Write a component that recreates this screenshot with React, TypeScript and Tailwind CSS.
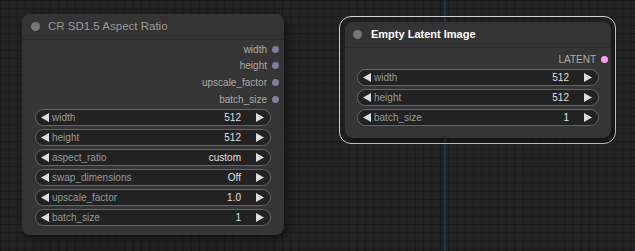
import React from 'react';

type Widget = { label: string; value: string };

const font = "font-['Liberation_Sans',Arial,sans-serif]";

function Arrow({ dir }: { dir: 'l' | 'r' }) {
  return (
    <svg width="8" height="9" viewBox="0 0 8 9" className="shrink-0">
      {dir === 'l' ? (
        <polygon points="8,0 8,9 0,4.5" fill="#dddddd" />
      ) : (
        <polygon points="0,0 0,9 8,4.5" fill="#dddddd" />
      )}
    </svg>
  );
}

function WidgetRow({ w }: { w: Widget }) {
  return (
    <div className="h-[20px] flex items-center">
      <div className="h-[17px] w-full rounded-full border border-[#646464] bg-[#222222] flex items-center pl-[5px] pr-[6px] text-[10px]">
        <Arrow dir="l" />
        <span className="ml-[3px] text-[#999999]">{w.label}</span>
        <span className="ml-auto text-[#e0e0e0]">{w.value}</span>
        <span className="ml-[15px]">
          <Arrow dir="r" />
        </span>
      </div>
    </div>
  );
}

function OutputRow({ label, color }: { label: string; color: string }) {
  return (
    <div className="h-[16.6px] flex items-center justify-end text-[10px] text-[#aaaaaa]">
      <span>{label}</span>
      <span className={`ml-[5px] mr-[-1px] w-[7px] h-[7px] rounded-full ${color}`} />
    </div>
  );
}

const leftWidgets: Widget[] = [
  { label: 'width', value: '512' },
  { label: 'height', value: '512' },
  { label: 'aspect_ratio', value: 'custom' },
  { label: 'swap_dimensions', value: 'Off' },
  { label: 'upscale_factor', value: '1.0' },
  { label: 'batch_size', value: '1' },
];

const rightWidgets: Widget[] = [
  { label: 'width', value: '512' },
  { label: 'height', value: '512' },
  { label: 'batch_size', value: '1' },
];

export default function App() {
  return (
    <div
      className={`relative w-[635px] h-[251px] overflow-hidden bg-[#222222] bg-[linear-gradient(#1a1a1a_1px,transparent_1px),linear-gradient(90deg,#1a1a1a_1px,transparent_1px)] bg-[size:8.3px_8.3px] ${font}`}
    >
      {/* link line */}
      <div className="absolute left-[444px] top-0 w-[1.5px] h-full bg-[#26324a]" />

      {/* CR SD1.5 Aspect Ratio */}
      <div className="absolute left-[22px] top-[14px] w-[262px] h-[221px] rounded-[8px] bg-[#353535] shadow-[2px_3px_6px_rgba(0,0,0,0.5)] flex flex-col">
        <div className="h-[26px] shrink-0 rounded-t-[8px] bg-[#333333] border-b border-[#2c2c2c] flex items-center pl-[9px]">
          <span className="w-[9px] h-[9px] rounded-full bg-[#777777]" />
          <span className="ml-[8px] text-[11.5px] text-[#999999]">CR SD1.5 Aspect Ratio</span>
        </div>
        <div className="px-[13px] pt-[1px]">
          <div className="mr-[-7px]">
            <OutputRow label="width" color="bg-[#7f7f9f]" />
            <OutputRow label="height" color="bg-[#7f7f9f]" />
            <OutputRow label="upscale_factor" color="bg-[#7f7f9f]" />
            <OutputRow label="batch_size" color="bg-[#7f7f9f]" />
          </div>
          <div>
            {leftWidgets.map((w) => (
              <WidgetRow key={w.label} w={w} />
            ))}
          </div>
        </div>
      </div>

      {/* Empty Latent Image (selected) */}
      <div className="absolute left-[339px] top-[16px] w-[277px] h-[128px] rounded-[12px] border-[1.5px] border-[#d0d0d0]" />
      <div className="absolute left-[345px] top-[22px] w-[266px] h-[116px] rounded-[8px] bg-[#353535] shadow-[2px_3px_6px_rgba(0,0,0,0.5)] flex flex-col">
        <div className="h-[26px] shrink-0 rounded-t-[8px] bg-[#333333] border-b border-[#2c2c2c] flex items-center pl-[8px]">
          <span className="w-[9px] h-[9px] rounded-full bg-[#777777]" />
          <span className="ml-[9px] text-[11px] font-bold text-white">Empty Latent Image</span>
        </div>
        <div className="px-[12px] pt-[3px]">
          <div className="mr-[-8px]">
            <OutputRow label="LATENT" color="bg-[#ff9cf9]" />
          </div>
          <div>
            {rightWidgets.map((w) => (
              <WidgetRow key={w.label} w={w} />
            ))}
          </div>
        </div>
      </div>
    </div>
  );
}
